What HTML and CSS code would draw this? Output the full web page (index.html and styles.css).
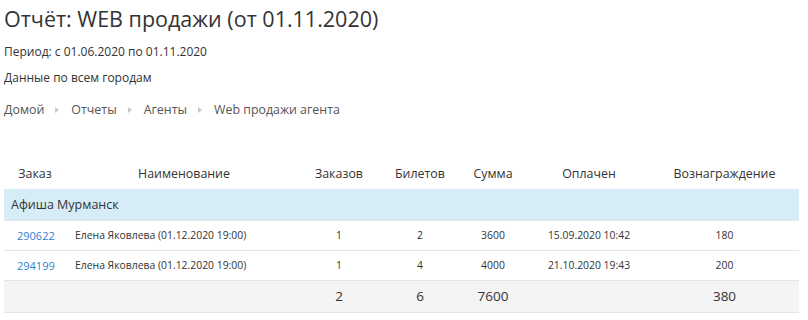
FILE: index.html
```html
<!DOCTYPE html>
<html lang="ru">
<head>
<meta charset="utf-8">
<title>Отчёт</title>
<link rel="stylesheet" href="styles.css">
</head>
<body>
<div class="page">
  <h1 class="title">Отчёт: WEB продажи (от 01.11.2020)</h1>
  <p class="info first">Период: с 01.06.2020 по 01.11.2020</p>
  <p class="info">Данные по всем городам</p>
  <nav class="crumbs">
    <span>Домой</span><span class="sep"></span>
    <span>Отчеты</span><span class="sep"></span>
    <span>Агенты</span><span class="sep"></span>
    <span>Web продажи агента</span>
  </nav>
  <table class="report">
    <colgroup>
      <col class="c1"><col class="c2"><col class="c3"><col class="c4"><col class="c5"><col class="c6"><col class="c7">
    </colgroup>
    <thead>
      <tr>
        <th>Заказ</th><th>Наименование</th><th>Заказов</th><th>Билетов</th><th>Сумма</th><th>Оплачен</th><th class="last">Вознаграждение</th>
      </tr>
    </thead>
    <tbody>
      <tr class="group"><td colspan="7">Афиша Мурманск</td></tr>
      <tr class="row">
        <td class="order"><a href="#">290622</a></td><td class="name">Елена Яковлева (01.12.2020 19:00)</td><td>1</td><td>2</td><td>3600</td><td>15.09.2020 10:42</td><td class="last">180</td>
      </tr>
      <tr class="row">
        <td class="order"><a href="#">294199</a></td><td class="name">Елена Яковлева (01.12.2020 19:00)</td><td>1</td><td>4</td><td>4000</td><td>21.10.2020 19:43</td><td class="last">200</td>
      </tr>
      <tr class="total">
        <td></td><td></td><td>2</td><td>6</td><td>7600</td><td></td><td class="last">380</td>
      </tr>
    </tbody>
  </table>
</div>
</body>
</html>
```

FILE: styles.css
```css
* { box-sizing: border-box; }
html, body { margin: 0; background: #fff; }
body {
  font-family: "Open Sans", "Noto Sans", sans-serif;
  color: #333;
}
.page { padding: 6px 9px 0 4px; }
.title {
  margin: 0;
  font-size: 21.5px;
  font-weight: 400;
  line-height: 26px;
  color: #333;
}
.info {
  margin: 8px 0 0;
  font-size: 12px;
  line-height: 18px;
}
.info.first { margin-top: 11px; }
.crumbs {
  margin-top: 14px;
  display: flex;
  align-items: center;
  font-size: 12.4px;
  line-height: 18px;
  color: #555;
}
.sep {
  width: 0;
  height: 0;
  margin: 0 12px 0 11px;
  border-top: 3px solid transparent;
  border-bottom: 3px solid transparent;
  border-left: 4px solid #c8c8c8;
}
.report {
  margin-top: 38px;
  width: 795px;
  border-collapse: collapse;
  table-layout: fixed;
}
.c1 { width: 62px; }
.c2 { width: 236px; }
.c3 { width: 74px; }
.c4 { width: 88px; }
.c5 { width: 58px; }
.c6 { width: 134px; }
.c7 { width: 143px; }
.report th {
  height: 32px;
  padding: 0 4px;
  font-size: 12.4px;
  font-weight: 400;
  text-align: center;
  color: #333;
}
.report td {
  padding: 0 4px;
  text-align: center;
  border-top: 1px solid #e4e4e4;
}
.report .last { padding-right: 10px; }
.group td {
  height: 31px;
  background: #d6edf7;
  text-align: left;
  padding-left: 7px;
  font-size: 12.5px;
  border-top: none;
}
.row td {
  height: 30px;
  font-size: 10.4px;
}
.row td.order { text-align: left; padding-left: 13px; font-size: 11px; }
.row td.name { text-align: left; padding-left: 9px; }
.order a { color: #2f7fd1; text-decoration: none; }
.total td {
  height: 32px;
  background: #f4f4f4;
  font-size: 13.5px;
  border-bottom: 1px solid #e4e4e4;
}
```
